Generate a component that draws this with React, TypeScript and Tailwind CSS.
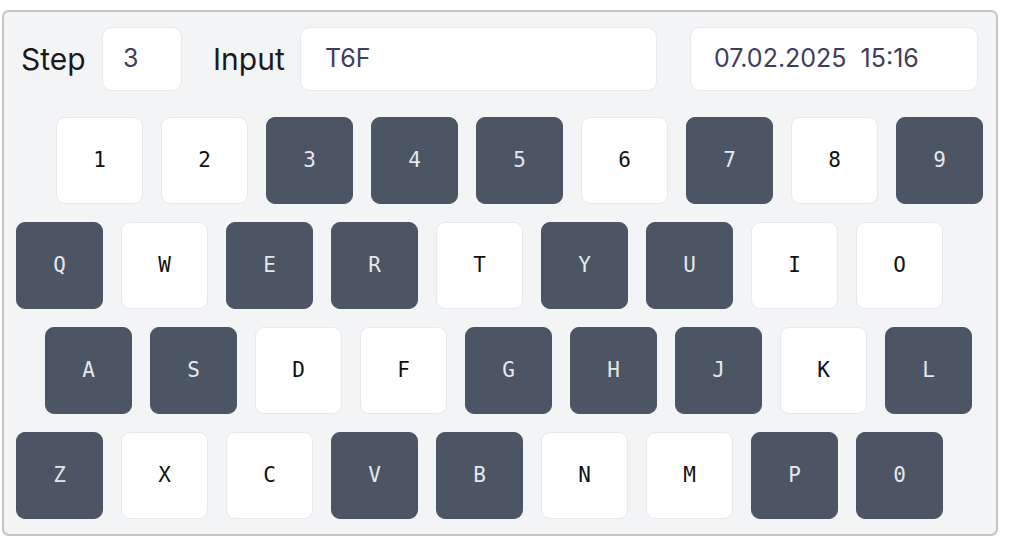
const rows: { pad: string; keys: [string, boolean][] }[] = [
  {
    pad: "pl-[52px]",
    keys: [
      ["1", false], ["2", false], ["3", true], ["4", true], ["5", true],
      ["6", false], ["7", true], ["8", false], ["9", true],
    ],
  },
  {
    pad: "pl-[12px]",
    keys: [
      ["Q", true], ["W", false], ["E", true], ["R", true], ["T", false],
      ["Y", true], ["U", true], ["I", false], ["O", false],
    ],
  },
  {
    pad: "pl-[41px]",
    keys: [
      ["A", true], ["S", true], ["D", false], ["F", false], ["G", true],
      ["H", true], ["J", true], ["K", false], ["L", true],
    ],
  },
  {
    pad: "pl-[12px]",
    keys: [
      ["Z", true], ["X", false], ["C", false], ["V", true], ["B", true],
      ["N", false], ["M", false], ["P", true], ["0", true],
    ],
  },
];

function Key({ label, dark }: { label: string; dark: boolean }) {
  return (
    <div
      className={
        dark
          ? "flex h-[87px] w-[87px] items-center justify-center rounded-[9px] border border-[#4b5563] bg-[#4b5563] text-[21px] text-[#e5e7eb]"
          : "flex h-[87px] w-[87px] items-center justify-center rounded-[9px] border border-[#e8e9ec] bg-white text-[21px] text-[#111111]"
      }
      style={{ fontFamily: '"DejaVu Sans Mono", "Liberation Mono", monospace' }}
    >
      {label}
    </div>
  );
}

export default function App() {
  return (
    <div className="h-[537px] w-[1035px] bg-white pl-[2px] pt-[10px]" style={{ fontFamily: "Inter, sans-serif" }}>
      <div className="flex h-[526px] w-[996px] flex-col rounded-[7px] border-2 border-[#c4c4c4] bg-[#f3f4f6] pt-[15px]">
        <div className="flex items-center pl-[17px]">
          <span className="w-[64px] text-[30px] text-[#1a1a1a]">Step</span>
          <div className="ml-[17px] flex h-[64px] w-[80px] items-center rounded-[10px] border border-[#e8e9ec] bg-white pl-[20px] text-[25px] text-[#403c5c]">
            3
          </div>
          <span className="ml-[31px] w-[71px] text-[30px] text-[#1a1a1a]">Input</span>
          <div className="ml-[16px] flex h-[64px] w-[357px] items-center rounded-[10px] border border-[#e8e9ec] bg-white pl-[24px] text-[25px] text-[#403c5c]">
            T6F
          </div>
          <div className="ml-[33px] flex h-[64px] w-[288px] items-center rounded-[10px] border border-[#e8e9ec] bg-white pl-[23px] text-[25px] text-[#403c5c]">
            07.02.2025&nbsp;&nbsp;15:16
          </div>
        </div>
        <div className="mt-[26px] flex flex-col gap-[18px]">
          {rows.map((row, i) => (
            <div key={i} className={`flex gap-[18px] ${row.pad}`}>
              {row.keys.map(([label, dark]) => (
                <Key key={label} label={label} dark={dark} />
              ))}
            </div>
          ))}
        </div>
      </div>
    </div>
  );
}
